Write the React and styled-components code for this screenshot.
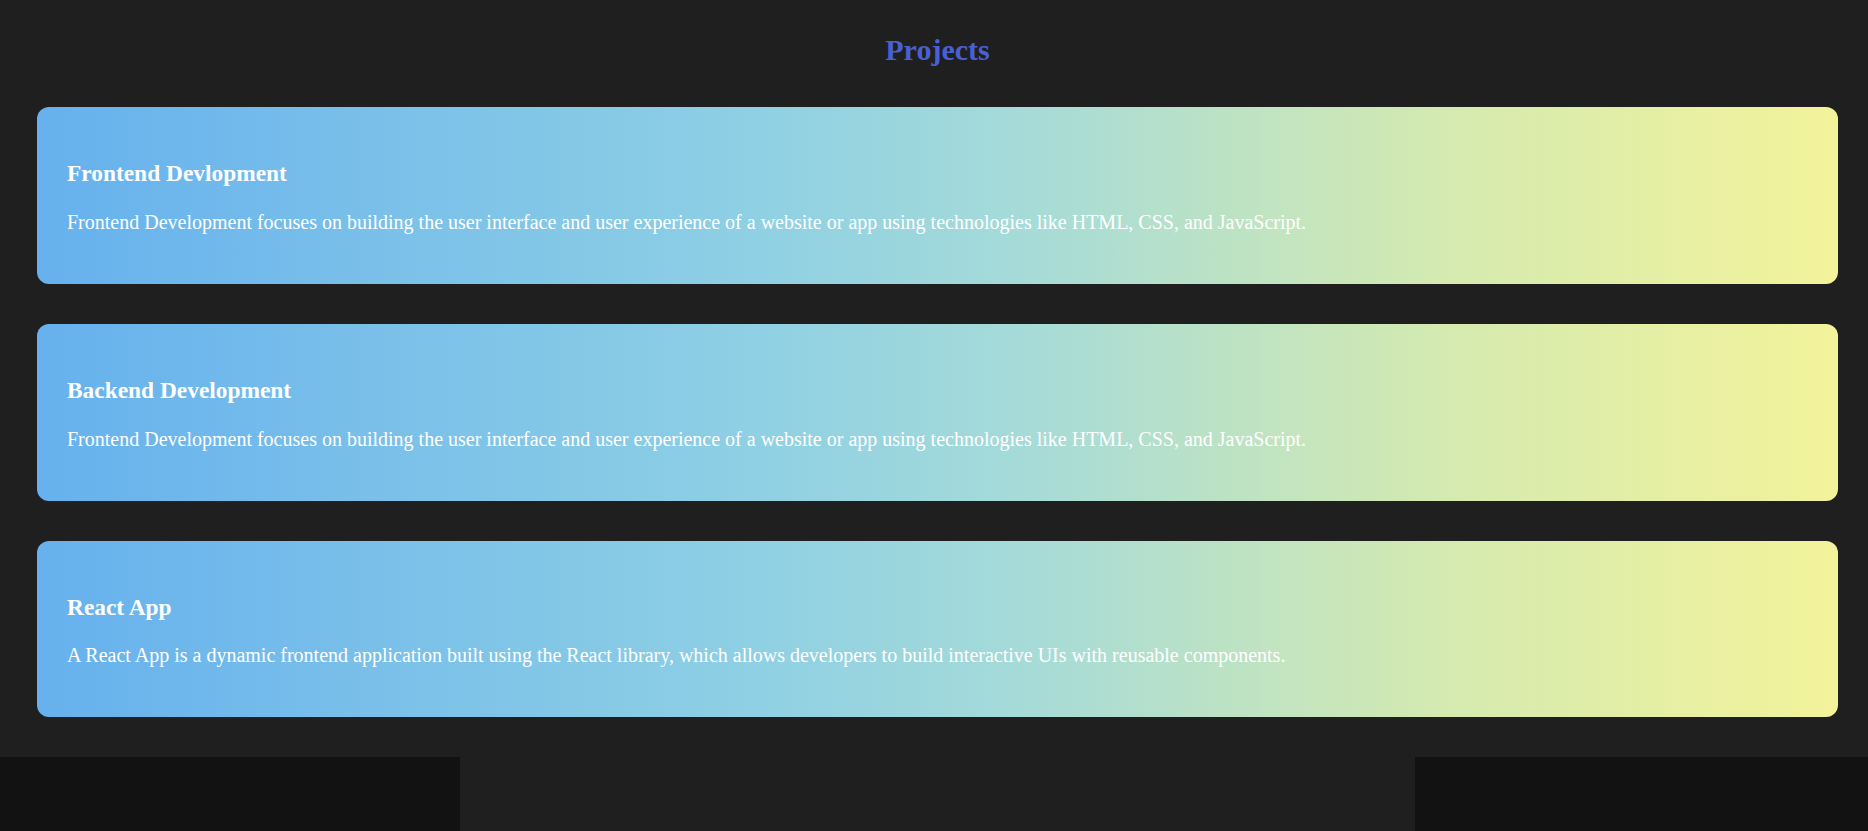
import styled, { createGlobalStyle } from "styled-components"

const projects = [
    {
        title: "Frontend Devlopment",
        desc: "Frontend Development focuses on building the user interface and user experience of a website or app using technologies like HTML, CSS, and JavaScript.",
    },
    {
        title: "Backend Development",
        desc: "Frontend Development focuses on building the user interface and user experience of a website or app using technologies like HTML, CSS, and JavaScript.",
    },
    {
        title: "React App",
        desc: "A React App is a dynamic frontend application built using the React library, which allows developers to build interactive UIs with reusable components.",
    },
]

export default function App() {
    return (
        <>
            <GlobalStyle />
            <Section>
                <Heading>Projects</Heading>
                <List>
                    {projects.map((project) => (
                        <Card key={project.title}>
                            <Title>{project.title}</Title>
                            <Desc>{project.desc}</Desc>
                        </Card>
                    ))}
                </List>
            </Section>
            <Footer>
                <FooterSide />
                <FooterMiddle />
                <FooterSide $width="453px" />
            </Footer>
        </>
    )
}

const GlobalStyle = createGlobalStyle`
    html, body {
        margin: 0;
        padding: 0;
        background-color: #1f1f1f;
        font-family: "Liberation Serif", "Times New Roman", serif;
    }
`

const Section = styled.section`
    padding: 33px 30px 40px 37px;
    display: flex;
    flex-direction: column;
`

const Heading = styled.h2`
    margin: 0 0 40px;
    text-align: center;
    font-size: 30px;
    font-weight: 700;
    color: #4a5fd2;
`

const List = styled.div`
    display: flex;
    flex-direction: column;
    gap: 40px;
`

const Card = styled.div`
    padding: 30px;
    border-radius: 12px;
    background: linear-gradient(to right, #66b1ee 0%, #8fd0e4 40%, #a6dbd8 55%, #d4eab0 78%, #f3f39a 100%);
    color: #ffffff;
`

const Title = styled.h3`
    margin: 23.4px 0;
    font-size: 23.4px;
    font-weight: 700;
`

const Desc = styled.p`
    margin: 20px 0;
    font-size: 20px;
`

const Footer = styled.footer`
    display: flex;
    height: 74px;
`

const FooterSide = styled.div`
    width: ${props => props.$width || "460px"};
    background-color: #121212;
`

const FooterMiddle = styled.div`
    flex-grow: 1;
`
